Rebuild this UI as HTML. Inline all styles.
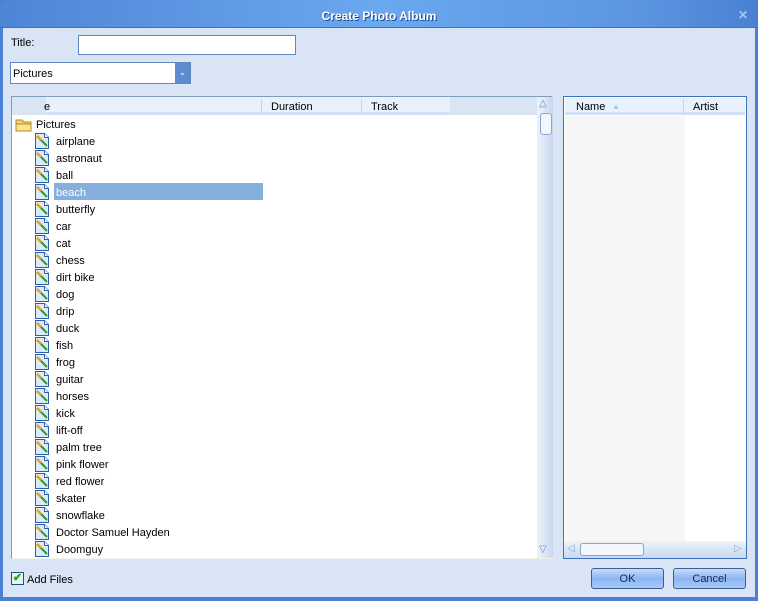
<!DOCTYPE html>
<html><head><style>
*{margin:0;padding:0;box-sizing:border-box}
body{width:758px;height:601px;overflow:hidden;background:#4a7fd2;font-family:"Liberation Sans",sans-serif;font-size:11px;color:#000;position:relative}
.title{position:absolute;left:0;top:0;width:758px;height:28px;background:linear-gradient(90deg,#4f85d6 0%,#6aa8ef 50%,#5b95e0 85%,#4a80d2 100%);border-radius:7px 7px 0 0;border-bottom:1px solid #3f72c0}
.title span{position:absolute;left:0;width:758px;top:9px;text-align:center;color:#fff;font-weight:bold;font-size:12px;text-shadow:1px 1px 0 #234a90}
.x{position:absolute;right:10px;top:8px;color:#a9c6ee;font-weight:bold;font-size:12px}
.body{position:absolute;left:3px;top:28px;width:752px;height:569px;background:#d9e5f4}
.abs{position:absolute}
.box{position:absolute;background:#fff;border:1px solid #3f72bd}
.row{position:absolute;left:34px;height:17px;line-height:17px}
.row svg{position:absolute;left:0;top:0}
.row span{position:absolute;left:20px;top:1px;padding:0 2px;white-space:nowrap;font-size:11px}
.btn{position:absolute;width:73px;height:21px;border:1px solid #3a5d98;border-radius:3px;background:linear-gradient(#c8dcfb,#8db5f3 50%,#a9c8f8);text-align:center;line-height:20px;color:#0f2a57}
</style></head><body>
<div class="title"><span>Create Photo Album</span><div class="x">✕</div></div>
<div class="body"></div>
<div class="abs" style="left:11px;top:37px">Title:</div>
<div class="box" style="left:78px;top:35px;width:218px;height:20px;border-color:#5f86be"></div>
<div class="box" style="left:10px;top:62px;width:181px;height:22px;border-color:#5f86be"><div style="position:absolute;left:2px;top:5px">Pictures</div>
<div style="position:absolute;right:0;top:0;width:15px;height:20px;background:#5d8bd2;color:#fff;text-align:center;line-height:18px;font-size:9px">⌄</div></div>
<div class="box" style="left:11px;top:96px;width:542px;height:463px;border-color:#7f9db9;border-bottom-color:#f4f4ea;border-right-color:#f4f4ea"></div>
<div class="abs" style="left:12px;top:97px;width:438px;height:18px;background:#e8f2fd;border-bottom:3px solid #d0e0f5"></div>
<div class="abs" style="left:12px;top:97px;width:34px;height:18px;background:#d9e5f4"></div>
<div class="abs" style="left:44px;top:101px">e</div>
<div class="abs" style="left:261px;top:99px;width:1px;height:14px;background:#c5d5e8"></div>
<div class="abs" style="left:271px;top:101px">Duration</div>
<div class="abs" style="left:361px;top:99px;width:1px;height:14px;background:#c5d5e8"></div>
<div class="abs" style="left:371px;top:101px">Track</div>
<div class="abs" style="left:450px;top:97px;width:87px;height:18px;background:#d9e5f4"></div>
<div class="abs" style="left:537px;top:97px;width:16px;height:461px;background:linear-gradient(90deg,#eef3fb,#c8d8f0)"></div>
<div class="abs" style="left:539px;top:98px;color:#6f8fb8;font-size:10px">△</div>
<div class="abs" style="left:539px;top:544px;color:#6f8fb8;font-size:10px">▽</div>
<div class="abs" style="left:540px;top:113px;width:12px;height:22px;border:1px solid #8aa6cc;border-radius:3px;background:#f2f6fd"></div>
<div class="abs" style="left:54px;top:183px;width:209px;height:17px;background:#85afdd"></div>
<div class="row" style="left:15px;top:116px"><svg width="18" height="16"><path d="M1 4h6l2 2h7v9H1z" fill="#f6d46c" stroke="#b38b1c"/><path d="M1 8h15v7H1z" fill="#fbe49a" stroke="#b38b1c"/></svg><span style="left:19px">Pictures</span></div>
<div id="rows"></div>
<div class="box" style="left:563px;top:96px;width:184px;height:463px;border-color:#3f72bd"></div>
<div class="abs" style="left:565px;top:98px;width:180px;height:17px;background:#e8f2fd;border-bottom:3px solid #d0e0f5"></div>
<div class="abs" style="left:576px;top:101px">Name</div>
<div class="abs" style="left:612px;top:102px;color:#a8c4e6;font-size:8px">▲</div>
<div class="abs" style="left:683px;top:99px;width:1px;height:14px;background:#c5d5e8"></div>
<div class="abs" style="left:693px;top:101px">Artist</div>
<div class="abs" style="left:565px;top:116px;width:120px;height:425px;background:#f6f6f6"></div>
<div class="abs" style="left:564px;top:541px;width:182px;height:17px;background:linear-gradient(#eef3fb,#c8d8f0)"></div>
<div class="abs" style="left:567px;top:543px;color:#8aa6cc;font-size:10px">◁</div>
<div class="abs" style="left:734px;top:543px;color:#8aa6cc;font-size:10px">▷</div>
<div class="abs" style="left:580px;top:543px;width:64px;height:13px;border:1px solid #8aa6cc;border-radius:3px;background:#f2f6fd"></div>
<div class="abs" style="left:11px;top:572px;width:13px;height:13px;border:1px solid #1c5180;background:#e6f4e6;color:#21a121;font-size:11px;line-height:11px;text-align:center;font-weight:bold">✔</div>
<div class="abs" style="left:27px;top:574px">Add Files</div>
<div class="btn" style="left:591px;top:568px">OK</div>
<div class="btn" style="left:673px;top:568px">Cancel</div>
<script>
var n=["airplane","astronaut","ball","beach","butterfly","car","cat","chess","dirt bike","dog","drip","duck","fish","frog","guitar","horses","kick","lift-off","palm tree","pink flower","red flower","skater","snowflake","Doctor Samuel Hayden","Doomguy"];
var h="";n.forEach(function(t,i){var y=133+i*17;var c=t=="beach"?' style="color:#fff"':'';
h+='<div class="row" style="top:'+y+'px"><svg width="17" height="16"><path d="M1.5 0.5h9l4 4v11h-13z" fill="#dcebfb" stroke="#2f5fa8"/><path d="M10.5 0.5v4h4" fill="#fff" stroke="#2f5fa8"/><path d="M3 3l10 10" stroke="#2e9a2e" stroke-width="2"/><path d="M3 3l4 4" stroke="#e8a020" stroke-width="2.5"/></svg><span'+c+'>'+t+'</span></div>';});
document.getElementById("rows").innerHTML=h;
</script>
</body></html>
